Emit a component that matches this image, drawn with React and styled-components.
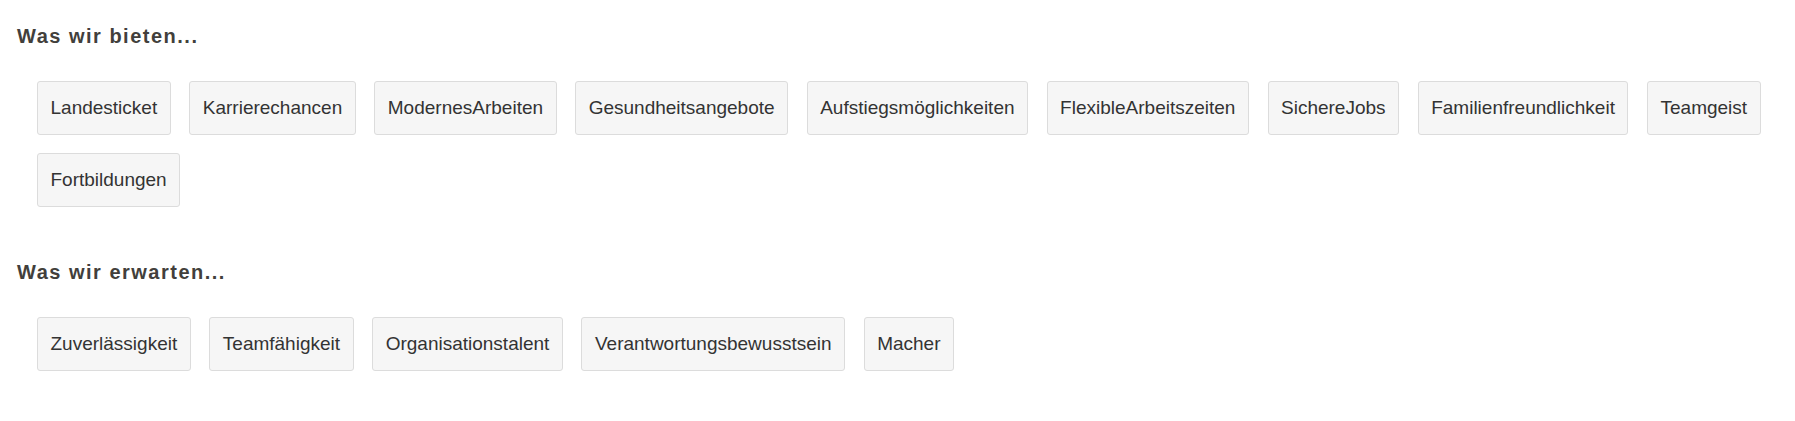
import React from "react";
import styled, { createGlobalStyle } from "styled-components";

const GlobalStyle = createGlobalStyle`
  html, body {
    margin: 0;
    padding: 0;
    background: #fff;
  }
  body {
    font-family: "Liberation Sans", Arial, sans-serif;
  }
`;

const Page = styled.div`
  padding: 24px 16px 0 17px;
`;

const Section = styled.section`
  margin-bottom: 53px;
`;

const Heading = styled.h3`
  margin: 0;
  font-size: 20px;
  line-height: 25px;
  font-weight: 700;
  letter-spacing: 1.5px;
  color: #423f3c;
`;

const TagList = styled.ul`
  list-style: none;
  margin: 32px 0 0;
  padding: 0 0 0 20px;
  display: flex;
  flex-wrap: wrap;
  gap: 18px 18.6px;
`;

const Tag = styled.li`
  padding: 12px 12.5px 13px;
  font-size: 19px;
  line-height: 27px;
  color: #333;
  background: #f6f6f6;
  border: 1px solid #dcdcdc;
  border-radius: 3px;
  white-space: nowrap;
`;

const sections = [
  {
    title: "Was wir bieten...",
    tags: [
      "Landesticket",
      "Karrierechancen",
      "ModernesArbeiten",
      "Gesundheitsangebote",
      "Aufstiegsmöglichkeiten",
      "FlexibleArbeitszeiten",
      "SichereJobs",
      "Familienfreundlichkeit",
      "Teamgeist",
      "Fortbildungen",
    ],
  },
  {
    title: "Was wir erwarten...",
    tags: [
      "Zuverlässigkeit",
      "Teamfähigkeit",
      "Organisationstalent",
      "Verantwortungsbewusstsein",
      "Macher",
    ],
  },
];

function App() {
  return (
    <>
      <GlobalStyle />
      <Page>
        {sections.map((section) => (
          <Section key={section.title}>
            <Heading>{section.title}</Heading>
            <TagList>
              {section.tags.map((tag) => (
                <Tag key={tag}>{tag}</Tag>
              ))}
            </TagList>
          </Section>
        ))}
      </Page>
    </>
  );
}

export default App;
